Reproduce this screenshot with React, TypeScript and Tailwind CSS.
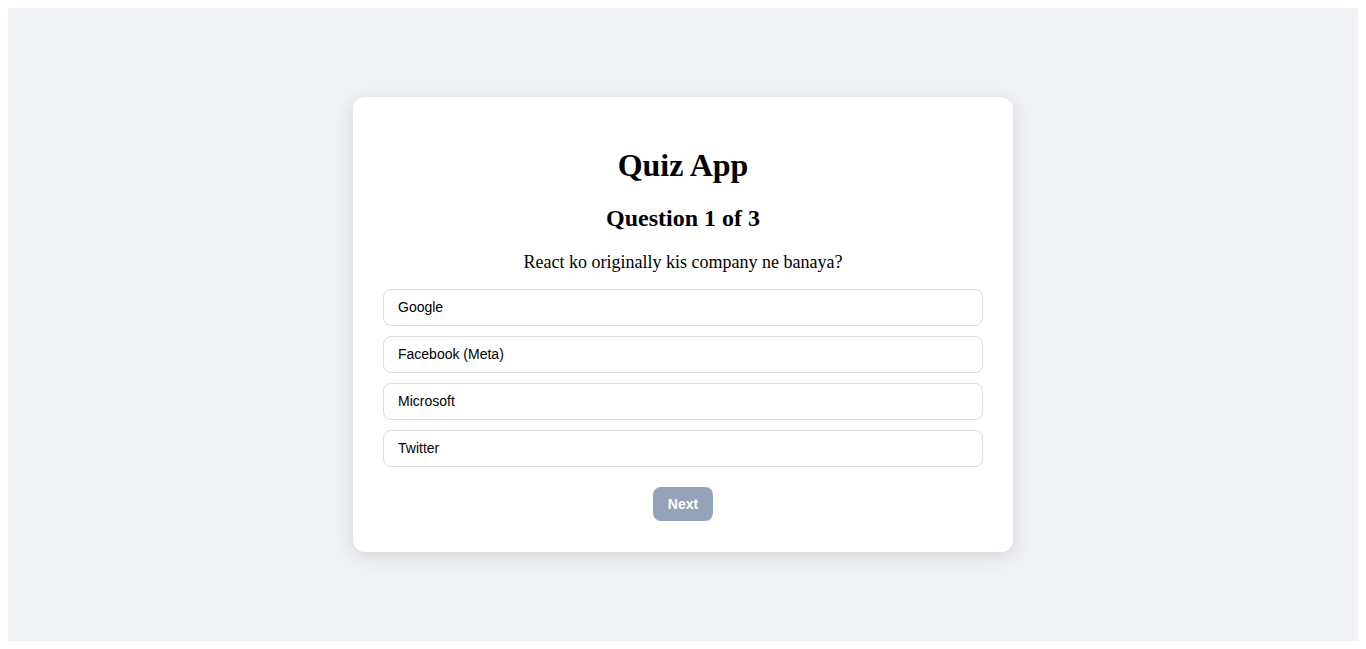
import React from "react";

const options = ["Google", "Facebook (Meta)", "Microsoft", "Twitter"];

export default function App() {
  return (
    <div className="h-[649px] bg-white p-2" style={{ fontFamily: '"Liberation Serif", serif' }}>
      <div className="flex h-full items-center justify-center bg-[#f0f2f5]">
        <div className="w-[660px] rounded-[12px] bg-white px-[30px] pb-[31px] pt-[30px] text-center text-black shadow-[0_4px_20px_rgba(0,0,0,0.12)]">
          <h1 className="mb-[19.44px] mt-[20.44px] text-[32px] font-bold leading-[37px]">Quiz App</h1>
          <h2 className="my-[19.92px] text-[24px] font-bold leading-[28px]">Question 1 of 3</h2>
          <p className="mb-[16px] mt-[18px] text-[18px] leading-[21px]">React ko originally kis company ne banaya?</p>
          <div className="flex flex-col gap-[10px]">
            {options.map((o) => (
              <button
                key={o}
                className="h-[37px] w-full rounded-[8px] border border-[#dddddd] bg-white px-[14px] text-left text-[14px] text-black"
                style={{ fontFamily: '"Liberation Sans", Arial, sans-serif' }}
              >
                {o}
              </button>
            ))}
          </div>
          <button
            className="mt-[20px] h-[34px] w-[60px] rounded-[8px] bg-[#94a3b8] text-[14px] font-bold text-white"
            style={{ fontFamily: '"Liberation Sans", Arial, sans-serif' }}
          >
            Next
          </button>
        </div>
      </div>
    </div>
  );
}
